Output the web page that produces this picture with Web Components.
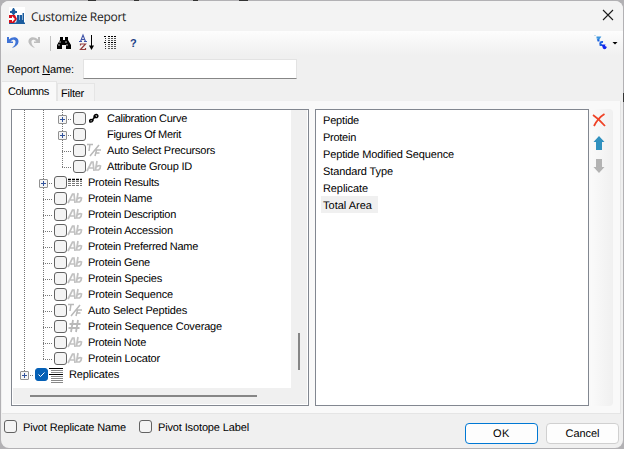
<!DOCTYPE html>
<html lang="en"><head><meta charset="utf-8"><title>Customize Report</title>
<style>html,body{margin:0;width:624px;height:449px;overflow:hidden;background:#b2b1b4}
body{background:linear-gradient(#333,#333) 193px 0/5px 1px no-repeat,linear-gradient(#333,#333) 239px 0/9px 1px no-repeat,linear-gradient(#333,#333) 88px 0/8px 1px no-repeat,linear-gradient(#333,#333) 134px 0/5px 1px no-repeat,linear-gradient(#333,#333) 623px 93px/1px 9px no-repeat,#b2b1b4}</style></head><body>
<report-dialog></report-dialog>
<script>
const define=(name,cls)=>customElements.define(name,cls);
const root=(el,html)=>{const t=document.createElement('template');t.innerHTML=html;const r=el.attachShadow({mode:'open'});r.append(t.content.cloneNode(true));return r;};

/* Text set to an exact run width by tracking. */
define('fit-label',class extends HTMLElement{connectedCallback(){
 if(this.shadowRoot)return;
 const r=root(this,`<style>:host{display:block;white-space:nowrap;flex:none}span{display:inline-block;text-rendering:geometricPrecision}</style><span><slot></slot></span>`);
 const w=+this.getAttribute('w'),s=r.querySelector('span'),n=this.textContent.length;
 if(w&&n>1){const d=(w-s.getBoundingClientRect().width)/n;s.style.letterSpacing=d.toFixed(3)+'px';}
}});

const ICONS={
 app:`<path fill="#fff" d="M0-1h16v17H0z"/><path fill="#1b5c9e" d="M4 0h1l1.500 3H8v2H6.500L5 7H4L2.500 5H1V3h1.500zM0 14.500h16V16H0zM7 15l1-4V7h2.500v5h.5V7h2v5h.5V5H15v10z"/><path fill="#d4101c" d="M0 7h6l2 4-3 4H0z"/><path fill="#fff" d="M0 10h3V8l3 3-3 3v-2H0z"/>`,
 undo:`<path d="M2 2v6h6V6.500H5.500C7.500 4 11 4 10.500 7.500 10.300 10 8.500 11.500 7 13q6-2 6.500-6C14 2 8 .500 4 4.500V2z" fill="#3f73d6"/>`,
 redo:`<path d="M14 2v6H8V6.500h2.500C8.500 4 5 4 5.500 7.500 5.700 10 7.500 11.500 9 13 3 11 2.500 7 2.500 7 2 2 8 .500 12 4.500V2z" fill="#bebebe"/>`,
 find:`<path d="M4 2h3v3h2V2h3v3l3 5v4h-5v-4H6v4H1v-4l3-5z"/><path d="M4 6v2M3 9v2M10 6v2M11 9v2" stroke="#fff" stroke-width=".7"/>`,
 sort:`<path d="M1.500 6.500L4 0l2.500 6.500M2.500 4.500h3M0 6.500h3M5 6.500h3" fill="none" stroke="#4054a8" stroke-width="1.100"/><path d="M1.500 10.500V9h5l-5 5.500h5V13" fill="none" stroke="#933f3f" stroke-width="1.200"/><path d="M12.500 0v14" stroke="#000"/><path d="M10 10.500h5L12.500 15z"/>`,
 list:`<path d="M1 1.500h2M1 7.500h2" stroke="#000"/><path d="M5 1.500h9M5 7.500h9" stroke="#000" stroke-dasharray="2 1"/><path d="M2 3.500h1M2 5.500h1M2 9.500h1M2 11.500h1M2 13.500h1" stroke="#333"/><path d="M5 3.500h9M5 5.500h9M5 9.500h9M5 11.500h9M5 13.500h9" stroke="#555" stroke-dasharray="2 1"/>`,
 pep:`<path d="M0.500 .500h1" stroke="#8bd"/><path d="M2.500 2.500h3l-2 3" fill="none" stroke="#3b94dd" stroke-width="2"/><path d="M3.500 5.500h2M9 7Q5.500 6.500 6.500 10h1.500" fill="none" stroke="#1a5fe0" stroke-width="2"/><path d="M8 10.500h2q-1 3 1 2.500l1-1.500" fill="none" stroke="#1226ee" stroke-width="2.200"/>`,
 ab:`<path d="M1 13L5.500 4H7l1 9M3 10h4" fill="none" stroke="#c1c1c1" stroke-width="1.700"/><path d="M11 3L9.500 12h3q2-1 2-4-2-1-4 1" fill="none" stroke="#c1c1c1" stroke-width="1.700"/>`,
 tf:`<path d="M1 2.500h6M4 2L3 9M4 14L13 3M9 14l1.500-6H15M9.500 11h4" fill="none" stroke="#b9b9b9" stroke-width="1.500"/>`,
 hash:`<path d="M6 2L4 14M11 2L9 14M2.500 6h11M1.500 10h11" fill="none" stroke="#b9b9b9" stroke-width="1.800"/>`,
 chain:`<path d="M4 12q-1-2 1-2.500 2 0 2 1-1 2-3 1.500zM8 7.500q0-3 2.500-3 2.500 1 .5 3zM6 10.500l3.500-4.500" fill="none" stroke="#000" stroke-width="1.500"/>`,
 rows:`<path d="M1 5.500h14" stroke="#000" stroke-dasharray="3 1" stroke-width="1.300"/><path d="M1 7.500h14M1 9.500h14M1 11.500h14" stroke="#777" stroke-dasharray="3 1"/>`,
 rep:`<path d="M1 2.500h14M1 8.500h14" stroke="#000"/><path d="M3 4.500h12M3 6.500h12M3 10.500h12M3 12.500h12M3 14.500h12M3 16.500h12" stroke="#888"/>`,
 none:``,
 del:`<path d="M2 3q6 4 12 11M13.500 2Q7 6 3 14" fill="none" stroke="#ef4327" stroke-width="1.800"/>`,
 up:`<path d="M8 1l5.500 6H11v8H5V7H2.500z" fill="#3091bf"/>`,
 down:`<path d="M8 15l5.500-6H11V1H5v8H2.500z" fill="#b3b3b3"/>`,
 close:`<path d="M4 2l10 10M14 2L4 12" stroke="#1b1b1b" stroke-width="1.100"/>`
};
define('ui-icon',class extends HTMLElement{connectedCallback(){if(this.shadowRoot)return;
 root(this,`<style>:host{display:block;width:16px;height:16px;flex:none}svg{display:block;overflow:visible}</style><svg width="16" height="16" viewBox="0 0 16 16">${ICONS[this.getAttribute('name')]}</svg>`);}});

define('check-box',class extends HTMLElement{connectedCallback(){if(this.shadowRoot)return;
 root(this,`<style>:host{display:block;box-sizing:border-box;width:13px;height:13px;flex:none;border:1px solid #626262;border-radius:3px;background:#f4f4f4}:host([checked]){background:#0560b6;border-color:#0560b6}svg{display:block}</style>${this.hasAttribute('checked')?'<svg width="11" height="11"><path d="M2.500 5.500l2 2 4-4" fill="none" stroke="#fff"/></svg>':''}`);}});

define('tree-row',class extends HTMLElement{connectedCallback(){if(this.shadowRoot)return;
 const lv=+this.getAttribute('level'),exp=this.hasAttribute('expand'),last=this.hasAttribute('last');
 const cells=[];
 for(let i=0;i<=lv;i++){cells.push(`<i class="${i===lv?'own':''}">${i===lv&&exp?'<b></b>':''}</i>`);}
 root(this,`<style>:host{display:flex;height:16px;padding-left:3px;align-items:flex-start}
 i{display:block;box-sizing:border-box;width:19px;height:16px;flex:none;padding:5px 0 0 5px;
  background:repeating-linear-gradient(#777 0 1px,transparent 1px 2px) 9px 0/1px 16px no-repeat}
 i.own{background:repeating-linear-gradient(#777 0 1px,transparent 1px 2px) 9px 0/1px ${last?10:16}px no-repeat,repeating-linear-gradient(90deg,#777 0 1px,transparent 1px 2px) 9px 9px/10px 1px no-repeat}
 b{display:block;box-sizing:border-box;width:9px;height:9px;border:1px solid #919191;border-radius:1px;
  background:linear-gradient(#31539c,#31539c) 1px 3px/5px 1px no-repeat,linear-gradient(#31539c,#31539c) 3px 1px/1px 5px no-repeat,#f5f5f5}
 check-box{margin:2px 0 0 1px}ui-icon{margin-right:5px}fit-label{line-height:16px}</style>
 ${cells.join('')}<check-box ${this.hasAttribute('checked')?'checked':''}></check-box><ui-icon name="${this.getAttribute('icon')}"></ui-icon><fit-label w="${this.getAttribute('w')}">${this.textContent}</fit-label>`);}});

define('column-tree',class extends HTMLElement{connectedCallback(){if(this.shadowRoot)return;
 root(this,`<style>:host{box-sizing:border-box;display:grid;width:298px;height:297px;border:1px solid #828790;background:#fff;grid-template:278px 16px/279px 16px;padding:0 1px 1px 0}
 .v,.h{background:#f0f0f0}.v{padding:223px 0 0 7px}.h{grid-column:1/3;padding:7px 0 0 17px;margin-left:1px}
 .v:before{content:"";display:block;width:2px;height:37px;background:#868686}.h:before{content:"";display:block;width:227px;height:2px;background:#868686}</style>
 <div><slot></slot></div><div class="v"></div><div class="h"></div>`);}});

define('list-item',class extends HTMLElement{connectedCallback(){if(this.shadowRoot)return;
 root(this,`<style>:host{display:block;width:max-content;height:17px;line-height:19px;padding:0 6px 0 2px;margin-left:5px}:host([selected]){background:#f0f0f0}</style><fit-label w="${this.getAttribute('w')}">${this.textContent}</fit-label>`);}});

define('push-button',class extends HTMLElement{connectedCallback(){if(this.shadowRoot)return;
 root(this,`<style>:host{box-sizing:border-box;display:flex;align-items:center;justify-content:center;width:73px;height:21px;border:1px solid #d0d0d0;border-radius:4px;background:#fdfdfd}:host([primary]){border-color:#0078d4}</style><slot></slot>`);}});

const tree=[
 [2,'chain','Calibration Curve',80,'expand'],[2,'none','Figures Of Merit',74,'expand'],[2,'tf','Auto Select Precursors',108,''],[2,'ab','Attribute Group ID',85,'last'],
 [1,'rows','Protein Results',71,'expand'],[1,'ab','Protein Name',64,''],[1,'ab','Protein Description',88,''],[1,'ab','Protein Accession',85,''],
 [1,'ab','Protein Preferred Name',110,''],[1,'ab','Protein Gene',62,''],[1,'ab','Protein Species',74,''],[1,'ab','Protein Sequence',85,''],
 [1,'tf','Auto Select Peptides',99,''],[1,'hash','Protein Sequence Coverage',134,''],[1,'ab','Protein Note',58,''],[1,'ab','Protein Locator',72,'last'],
 [0,'rep','Replicates',50,'expand last checked']];
const list=[['Peptide',36],['Protein',33],['Peptide Modified Sequence',131],['Standard Type',70],['Replicate',45],['Total Area',49,'selected']];

define('report-dialog',class extends HTMLElement{connectedCallback(){if(this.shadowRoot)return;
 root(this,`<style>
 :host{box-sizing:border-box;display:flex;flex-direction:column;width:622px;height:447px;margin:1px;border-radius:8px;overflow:hidden;background:#f0f0f0;color:#000;font:11px "Liberation Sans",Arial,sans-serif}
 .title{display:flex;align-items:center;height:30px;background:#f3f3f3;padding:0 8px 0 8px;font:12px "Open Sans","Noto Sans",sans-serif;color:#1a1a1a}
 .title fit-label{margin-left:6px;flex:1}
 .tools{display:flex;align-items:center;height:24px;padding:0 5px 0 4px;background:linear-gradient(#fdfdfd,#f0f0f0)}
 .sep{width:1px;height:15px;background:#c2c2c2;margin:0 5px 0 8px}
 .q{font:bold 11px "Liberation Sans",sans-serif;color:#1c3f85;margin-left:11px}
 .arrow{width:6px;height:3px;background:#000;clip-path:polygon(0 0,100% 0,50% 100%);margin-left:2px}
 .name{box-sizing:border-box;display:flex;align-items:center;height:26px;padding:2px 0 0 6px}
 .field{box-sizing:border-box;width:214px;height:20px;background:#fff;border:1px solid #e3e3e3;border-bottom-color:#868686;margin-left:9px}
 u{text-underline-offset:1px}
 .tabs{display:flex;align-items:flex-end;height:20px;padding-left:1px}
 .tab{box-sizing:border-box;border:1px solid #e5e5e5;border-bottom:0;height:18px;line-height:19px;width:38px;padding-left:3px;background:#f3f3f3}
 .tab.on{width:55px;height:20px;padding-left:6px;background:#f9f9f9;border-left:0}
 .page{box-sizing:border-box;display:flex;height:313px;margin:0 2px 0 1px;padding:8px 0 0 9px;background:#f9f9f9;border:solid #e5e5e5;border-width:0 1px 1px 0}
 .list{box-sizing:border-box;width:274px;height:297px;margin-left:6px;border:1px solid #828790;background:#fff;padding-top:1px}
 .side{display:flex;flex-direction:column;gap:7px;width:22px;height:297px;margin-left:2px;padding:3px 0 0 0;box-sizing:border-box;background:linear-gradient(90deg,#fafafa,#f0f0f0);border-radius:0 4px 4px 0}
 .foot{display:flex;align-items:flex-start;height:33px;padding:0 0 0 3px}
 .foot check-box{margin-top:6px}.foot fit-label{margin:7px 0 0 6px}
 .foot push-button{margin-top:9px}.foot push-button fit-label{margin:0}
 </style>
 <div class="title"><ui-icon name="app"></ui-icon><fit-label w="95">Customize Report</fit-label><ui-icon name="close"></ui-icon></div>
 <div class="tools"><ui-icon name="undo"></ui-icon><ui-icon name="redo" style="margin-left:5px"></ui-icon><div class="sep"></div><ui-icon name="find"></ui-icon><ui-icon name="sort" style="margin-left:7px"></ui-icon><ui-icon name="list" style="margin-left:8px"></ui-icon><span class="q">?</span><ui-icon name="pep" style="margin-left:auto"></ui-icon><div class="arrow"></div></div>
 <div class="name"><fit-label w="67">Report <u>N</u>ame:</fit-label><div class="field"></div></div>
 <div class="tabs"><div class="tab on"><fit-label w="41">Columns</fit-label></div><div class="tab"><fit-label w="23">Filter</fit-label></div></div>
 <div class="page"><column-tree>${tree.map(([l,i,t,w,a])=>`<tree-row level="${l}" icon="${i}" w="${w}" ${a}>${t}</tree-row>`).join('')}</column-tree>
 <div class="list">${list.map(([t,w,s])=>`<list-item w="${w}" ${s||''}>${t}</list-item>`).join('')}</div>
 <div class="side"><ui-icon name="del"></ui-icon><ui-icon name="up"></ui-icon><ui-icon name="down"></ui-icon></div></div>
 <div class="foot"><check-box></check-box><fit-label w="103">Pivot Replicate Name</fit-label><check-box style="margin-left:13px"></check-box><fit-label w="91">Pivot Isotope Label</fit-label><push-button primary style="margin-left:auto"><fit-label w="17">OK</fit-label></push-button><push-button style="margin-left:8px;margin-right:4px"><fit-label w="34">Cancel</fit-label></push-button></div>`);}});
</script></body></html>
